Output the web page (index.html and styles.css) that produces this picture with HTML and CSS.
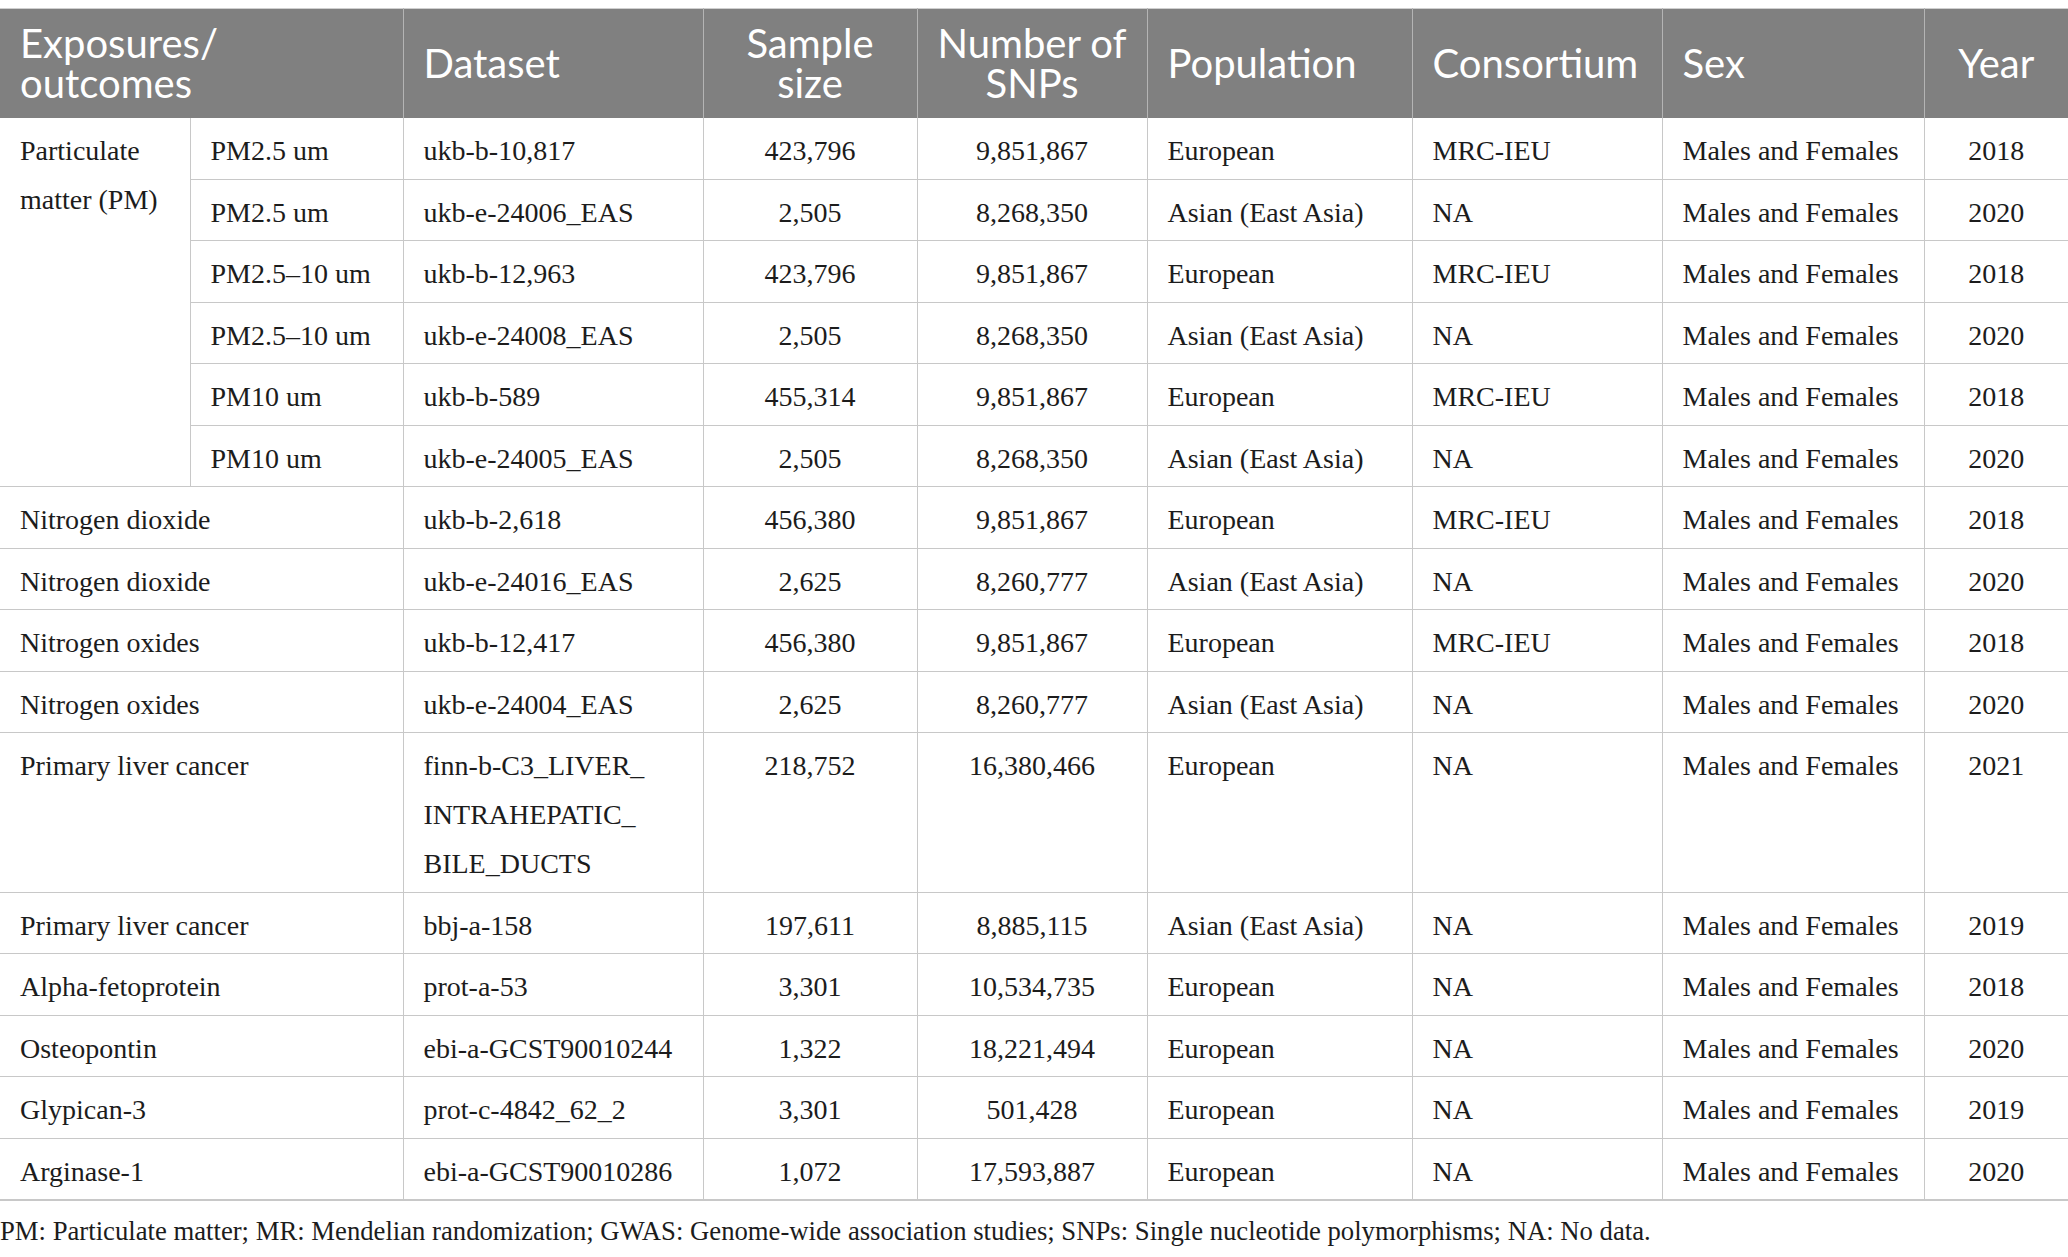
FILE: index.html
```html
<!DOCTYPE html>
<html>
<head>
<meta charset="utf-8">
<link rel="stylesheet" href="styles.css">
</head>
<body>
<table class="data">
  <colgroup>
    <col class="c1"><col class="c2"><col class="c3"><col class="c4"><col class="c5"><col class="c6"><col class="c7"><col class="c8"><col class="c9">
  </colgroup>
  <thead>
    <tr>
      <th colspan="2" class="first">Exposures/<br>outcomes</th>
      <th>Dataset</th>
      <th class="ctr">Sample<br>size</th>
      <th class="ctr">Number of<br>SNPs</th>
      <th>Population</th>
      <th>Consortium</th>
      <th>Sex</th>
      <th class="ctr">Year</th>
    </tr>
  </thead>
  <tbody>
    <tr>
      <td rowspan="6" class="first">Particulate<br>matter (PM)</td>
      <td>PM2.5 um</td><td>ukb-b-10,817</td><td class="ctr">423,796</td><td class="ctr">9,851,867</td><td>European</td><td>MRC-IEU</td><td>Males and Females</td><td class="ctr">2018</td>
    </tr>
    <tr>
      <td>PM2.5 um</td><td>ukb-e-24006_EAS</td><td class="ctr">2,505</td><td class="ctr">8,268,350</td><td>Asian (East Asia)</td><td>NA</td><td>Males and Females</td><td class="ctr">2020</td>
    </tr>
    <tr>
      <td>PM2.5–10 um</td><td>ukb-b-12,963</td><td class="ctr">423,796</td><td class="ctr">9,851,867</td><td>European</td><td>MRC-IEU</td><td>Males and Females</td><td class="ctr">2018</td>
    </tr>
    <tr>
      <td>PM2.5–10 um</td><td>ukb-e-24008_EAS</td><td class="ctr">2,505</td><td class="ctr">8,268,350</td><td>Asian (East Asia)</td><td>NA</td><td>Males and Females</td><td class="ctr">2020</td>
    </tr>
    <tr>
      <td>PM10 um</td><td>ukb-b-589</td><td class="ctr">455,314</td><td class="ctr">9,851,867</td><td>European</td><td>MRC-IEU</td><td>Males and Females</td><td class="ctr">2018</td>
    </tr>
    <tr>
      <td>PM10 um</td><td>ukb-e-24005_EAS</td><td class="ctr">2,505</td><td class="ctr">8,268,350</td><td>Asian (East Asia)</td><td>NA</td><td>Males and Females</td><td class="ctr">2020</td>
    </tr>
    <tr>
      <td colspan="2" class="first">Nitrogen dioxide</td><td>ukb-b-2,618</td><td class="ctr">456,380</td><td class="ctr">9,851,867</td><td>European</td><td>MRC-IEU</td><td>Males and Females</td><td class="ctr">2018</td>
    </tr>
    <tr>
      <td colspan="2" class="first">Nitrogen dioxide</td><td>ukb-e-24016_EAS</td><td class="ctr">2,625</td><td class="ctr">8,260,777</td><td>Asian (East Asia)</td><td>NA</td><td>Males and Females</td><td class="ctr">2020</td>
    </tr>
    <tr>
      <td colspan="2" class="first">Nitrogen oxides</td><td>ukb-b-12,417</td><td class="ctr">456,380</td><td class="ctr">9,851,867</td><td>European</td><td>MRC-IEU</td><td>Males and Females</td><td class="ctr">2018</td>
    </tr>
    <tr>
      <td colspan="2" class="first">Nitrogen oxides</td><td>ukb-e-24004_EAS</td><td class="ctr">2,625</td><td class="ctr">8,260,777</td><td>Asian (East Asia)</td><td>NA</td><td>Males and Females</td><td class="ctr">2020</td>
    </tr>
    <tr>
      <td colspan="2" class="first">Primary liver cancer</td><td>finn-b-C3_LIVER_<br>INTRAHEPATIC_<br>BILE_DUCTS</td><td class="ctr">218,752</td><td class="ctr">16,380,466</td><td>European</td><td>NA</td><td>Males and Females</td><td class="ctr">2021</td>
    </tr>
    <tr>
      <td colspan="2" class="first">Primary liver cancer</td><td>bbj-a-158</td><td class="ctr">197,611</td><td class="ctr">8,885,115</td><td>Asian (East Asia)</td><td>NA</td><td>Males and Females</td><td class="ctr">2019</td>
    </tr>
    <tr>
      <td colspan="2" class="first">Alpha-fetoprotein</td><td>prot-a-53</td><td class="ctr">3,301</td><td class="ctr">10,534,735</td><td>European</td><td>NA</td><td>Males and Females</td><td class="ctr">2018</td>
    </tr>
    <tr>
      <td colspan="2" class="first">Osteopontin</td><td>ebi-a-GCST90010244</td><td class="ctr">1,322</td><td class="ctr">18,221,494</td><td>European</td><td>NA</td><td>Males and Females</td><td class="ctr">2020</td>
    </tr>
    <tr>
      <td colspan="2" class="first">Glypican-3</td><td>prot-c-4842_62_2</td><td class="ctr">3,301</td><td class="ctr">501,428</td><td>European</td><td>NA</td><td>Males and Females</td><td class="ctr">2019</td>
    </tr>
    <tr>
      <td colspan="2" class="first">Arginase-1</td><td>ebi-a-GCST90010286</td><td class="ctr">1,072</td><td class="ctr">17,593,887</td><td>European</td><td>NA</td><td>Males and Females</td><td class="ctr">2020</td>
    </tr>
  </tbody>
</table>
<p class="note">PM: Particulate matter; MR: Mendelian randomization; GWAS: Genome-wide association studies; SNPs: Single nucleotide polymorphisms; NA: No data.</p>
</body>
</html>
```
FILE: styles.css
```css
html, body {
  margin: 0;
  padding: 0;
  background: #ffffff;
}

body {
  padding-top: 8px;
  font-family: "Liberation Serif", "Times New Roman", serif;
  color: #1c1c1c;
}

.data {
  width: 2068px;
  table-layout: fixed;
  border-collapse: collapse;
  border-top: 1px solid #cfcfcf;
  border-bottom: 2px solid #c8c8c8;
}

.c1 { width: 190px; }
.c2 { width: 213px; }
.c3 { width: 300px; }
.c4 { width: 214px; }
.c5 { width: 230px; }
.c6 { width: 265px; }
.c7 { width: 250px; }
.c8 { width: 262px; }
.c9 { width: 144px; }

.data th {
  background: #808080;
  color: #ffffff;
  font-family: Lato, "Open Sans", sans-serif;
  font-weight: 400;
  font-size: 40px;
  line-height: 40px;
  text-align: left;
  vertical-align: middle;
  white-space: nowrap;
  padding: 14px 20px 15px 20px;
  border-left: 1px solid #b4b4b4;
}

.data td {
  font-size: 28px;
  line-height: 49px;
  text-align: left;
  vertical-align: top;
  white-space: nowrap;
  padding: 8px 20px 3.5px 20px;
  border-left: 1px solid #c8c8c8;
  border-bottom: 1px solid #c8c8c8;
}

.data th.first,
.data td.first {
  border-left: none;
}

.data th.ctr,
.data td.ctr {
  text-align: center;
}

.note {
  margin: 10px 0 0 0;
  font-size: 26.7px;
  line-height: 40px;
  color: #1c1c1c;
}
```
